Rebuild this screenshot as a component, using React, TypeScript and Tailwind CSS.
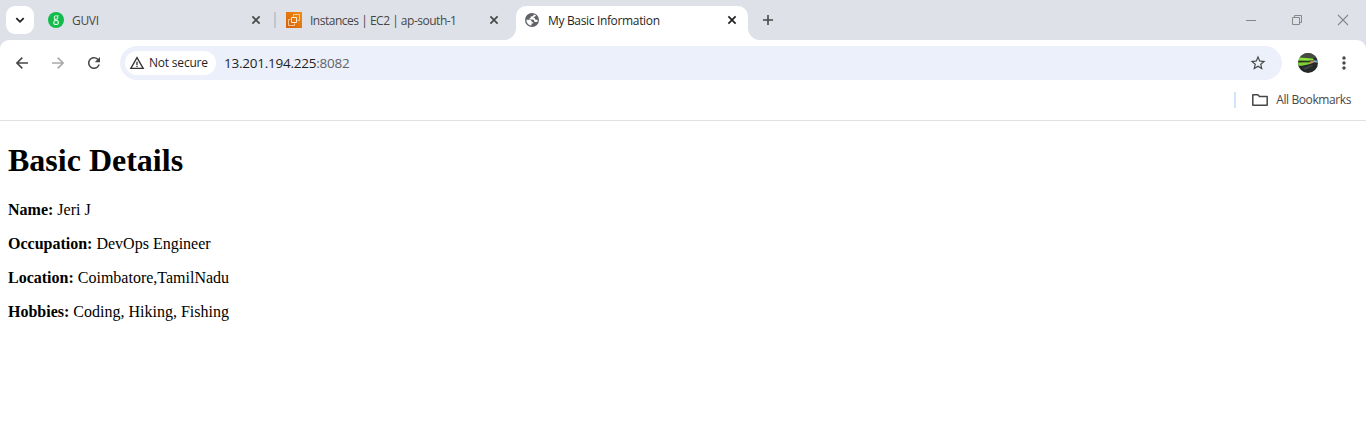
import type { ReactNode } from "react";
import { MdMoreVert, MdRefresh, MdStarBorder, MdWarningAmber } from "react-icons/md";

function CloseIcon() {
  return (
    <svg className="block size-4" viewBox="0 0 16 16" fill="none" stroke="currentColor" strokeWidth="1.7">
      <path d="M4.4 4.4l7.2 7.2M11.6 4.4l-7.2 7.2" />
    </svg>
  );
}

function GlobeIcon() {
  return (
    <svg className="block size-4" viewBox="0 0 16 16">
      <circle cx="8" cy="8" r="7" fill="#5f6368" />
      <path
        d="M9.600 2.600C9.600 4 8.800 4.500 7.500 4.500c-.8 0-.9.6-.9 1.100 0 .6-.5.900-1.100.900v1.100h3.200c1.100 0 1.500.8 1.500 1.600 0 .5.300.800.900.800h2.200c.3-.7.4-1.400.3-2.200h-1.300c-.8 0-1-.4-1.200-1-.2-.7-.8-1-1.600-1 .1-.8.700-1.200 1.400-1.300.8-.1 1-.7.800-1.400z"
        fill="#fff"
      />
      <path
        d="M2.400 7.700h2.900c1.600 0 2.600 1 2.600 2.500h1.300v1.400H7.500v2C4.600 13.400 2.300 10.900 2.400 7.700z"
        fill="#fff"
      />
    </svg>
  );
}

function GuviIcon() {
  return (
    <svg className="block size-4" viewBox="0 0 16 16">
      <circle cx="8" cy="8" r="8" fill="#12bb4c" />
      <g fill="none" stroke="#d9f7df" strokeWidth="1.1">
        <circle cx="8" cy="5.600" r="1.800" />
        <path d="M9.400 4.400l1-.9M7 7.200c-1 .7-.5 1.100.8 1.200 1.700 0 2.600.7 2.600 2s-1 2.100-2.400 2.100-2.300-.8-2.300-2c0-1.100.8-1.800 2-1.800" />
      </g>
    </svg>
  );
}

function Ec2Icon() {
  return (
    <svg className="block size-4" viewBox="0 0 16 16">
      <defs>
        <linearGradient id="ec2" x1="0" y1="1" x2="1" y2="0">
          <stop offset="0" stopColor="#d45f0b" />
          <stop offset="1" stopColor="#f58e10" />
        </linearGradient>
      </defs>
      <path fill="url(#ec2)" d="M0 0h16v16H0z" />
      <g fill="none" stroke="#ffe9d2" strokeWidth="1">
        <path d="M5.500 5.500h5v5h-5z" />
        <path d="M7.500 4.500v-2h6v6h-2M4.500 7.500h-2v6h6v-2" opacity=".7" />
      </g>
    </svg>
  );
}

interface TabProps {
  icon: ReactNode;
  label: string;
  labelClass: string;
  active?: boolean;
}

function Tab({ icon, label, labelClass, active = false }: TabProps) {
  return (
    <div
      className={
        active
          ? "relative flex h-[34px] w-[232px] items-center rounded-t-[10px] bg-white pr-2 pb-[6px] pl-2 text-[#1f1f1f]"
          : "relative flex h-[34px] w-[232px] items-center pr-2 pb-[6px] pl-2 text-[#474747]"
      }
    >
      {active && (
        <>
          <svg className="absolute bottom-0 -left-3 size-3" viewBox="0 0 12 12">
            <path d="M12 0v12H0A12 12 0 0 0 12 0z" fill="#fff" />
          </svg>
          <svg className="absolute -right-3 bottom-0 size-3" viewBox="0 0 12 12">
            <path d="M0 0v12h12A12 12 0 0 1 0 0z" fill="#fff" />
          </svg>
        </>
      )}
      {icon}
      <span className={`ml-2 flex-1 pt-[2px] whitespace-nowrap text-xs ${labelClass}`}>{label}</span>
      <CloseIcon />
    </div>
  );
}

function TabStrip() {
  return (
    <div className="flex h-10 bg-[#dee1e8] pt-[6px]">
      <div className="ml-[6px] flex size-7 items-center justify-center rounded-[9px] bg-white">
        <svg className="size-4" viewBox="0 0 16 16" fill="none" stroke="#1f1f1f" strokeWidth="1.8">
          <path d="M4.300 6.200L8 9.800l3.700-3.600" />
        </svg>
      </div>
      <div className="ml-[6px] flex">
        <Tab icon={<GuviIcon />} label="GUVI" labelClass="tracking-[-0.3px]" />
        <div className="mt-[6px] mr-[2px] ml-[2px] h-4 w-[2px] bg-[#c4c6ca]" />
        <Tab icon={<Ec2Icon />} label="Instances | EC2 | ap-south-1" labelClass="tracking-[-0.49px]" />
        <div className="w-[6px]" />
        <Tab active icon={<GlobeIcon />} label="My Basic Information" labelClass="tracking-[-0.34px]" />
      </div>
      <svg className="ml-3 mt-[6px] size-4" viewBox="0 0 16 16" stroke="#474747" strokeWidth="1.600">
        <path d="M8 3v10M3 8h10" />
      </svg>
      <div className="mt-[6px] mr-[15px] ml-auto flex gap-[30px]">
        <svg className="size-4" viewBox="0 0 16 16" fill="none" stroke="#858789">
          <path d="M3 8.500h10" />
        </svg>
        <svg className="size-4" viewBox="0 0 16 16" fill="none" stroke="#858789">
          <path d="M3.500 5.500h7v7h-7zM5.500 5.500v-2h7v7h-2" />
        </svg>
        <svg className="size-4" viewBox="0 0 16 16" fill="none" stroke="#858789" strokeWidth="1.100">
          <path d="M3 3l10 10M13 3L3 13" />
        </svg>
      </div>
    </div>
  );
}

function Avatar() {
  return (
    <svg className="block size-5" viewBox="0 0 20 20">
      <defs>
        <clipPath id="avatar">
          <circle cx="10" cy="10" r="10" />
        </clipPath>
      </defs>
      <g clipPath="url(#avatar)">
        <path d="M0 0h20v20H0z" fill="#25292a" />
        <path d="M0 0h20v5H0z" fill="#454b3e" />
        <path d="M1 4.500l14 1 1 1.700-6 .5L0 7.500z" fill="#8be53a" />
        <path d="M0 8h13v1.500H0z" fill="#23351e" />
        <path d="M0 9.500l11-.2 4-.3-4 2.300-7 1.400H0z" fill="#7fcf35" />
        <path d="M12 8.500l4-1 1 1.500-5 2z" fill="#c68c62" />
        <path d="M16 7l4 1v2l-4-1z" fill="#7da7ba" />
        <path d="M5 15l9-3 1 1-8 4z" fill="#3a4340" />
      </g>
    </svg>
  );
}

function Toolbar() {
  return (
    <div className="bg-[#dee1e8]">
      <div className="flex h-[46px] items-center rounded-t-[9px] bg-white pl-[14px]">
        <svg className="size-4" viewBox="0 0 16 16" fill="none" stroke="#474747" strokeWidth="1.600">
          <path d="M14 8H3M8.300 2.600L2.900 8l5.400 5.400" />
        </svg>
        <svg className="ml-5 size-4" viewBox="0 0 16 16" fill="none" stroke="#a9a9a9" strokeWidth="1.600">
          <path d="M2 8h11M7.700 2.600L13.100 8l-5.400 5.400" />
        </svg>
        <MdRefresh className="ml-[19px] size-[18px] text-[#474747]" />
        <div className="ml-[17px] flex h-[34px] w-[1162px] items-center rounded-full bg-[#ecf0fa] pr-[15px] pl-[5px]">
          <div className="flex h-6 w-[91px] items-center rounded-full bg-white pl-1">
            <MdWarningAmber className="size-4 text-[#333]" />
            <span className="ml-1 whitespace-nowrap text-xs font-medium tracking-[-0.2px] text-[#1f1f1f]">
              Not secure
            </span>
          </div>
          <div className="ml-2 flex-1 whitespace-nowrap text-[13.500px] leading-5 tracking-[-0.240px] text-[#1f1f1f]">
            13.201.194.225<span className="text-[#5f6368]">:8082</span>
          </div>
          <MdStarBorder className="size-[18px] text-[#474747]" />
        </div>
        <div className="ml-4">
          <Avatar />
        </div>
        <MdMoreVert className="ml-[16px] size-5 text-[#474747]" />
      </div>
    </div>
  );
}

function BookmarksBar() {
  return (
    <div className="flex h-[35px] items-start justify-end border-b border-[#e0e1e3] bg-white pt-[6px] pr-[15px]">
      <div className="h-4 w-[2px] bg-[#d3e3fd]" />
      <svg className="ml-[15px] h-4 w-[18px]" viewBox="0 0 18 16" fill="none" stroke="#474747" strokeWidth="1.500">
        <path d="M1.800 2.800h5l1.700 1.800h7.700v8.700H1.800z" strokeLinejoin="round" />
      </svg>
      <span className="ml-[7px] whitespace-nowrap text-xs tracking-[-0.400px] text-[#474747]">All Bookmarks</span>
    </div>
  );
}

const details = [
  { label: "Name:", value: "Jeri J" },
  { label: "Occupation:", value: "DevOps Engineer" },
  { label: "Location:", value: "Coimbatore,TamilNadu" },
  { label: "Hobbies:", value: "Coding, Hiking, Fishing" },
];

export default function App() {
  return (
    <div className="h-[446px] overflow-hidden bg-white font-['Open_Sans','Noto_Sans',sans-serif]">
      <TabStrip />
      <Toolbar />
      <BookmarksBar />
      <main className="px-2 pt-[21px] font-['Liberation_Serif',serif] text-black">
        <h1 className="mb-[22px] text-[32px] leading-[37px] font-bold">Basic Details</h1>
        {details.map((item) => (
          <p key={item.label} className="mb-4 text-base leading-[18px]">
            <b>{item.label}</b> {item.value}
          </p>
        ))}
      </main>
    </div>
  );
}
